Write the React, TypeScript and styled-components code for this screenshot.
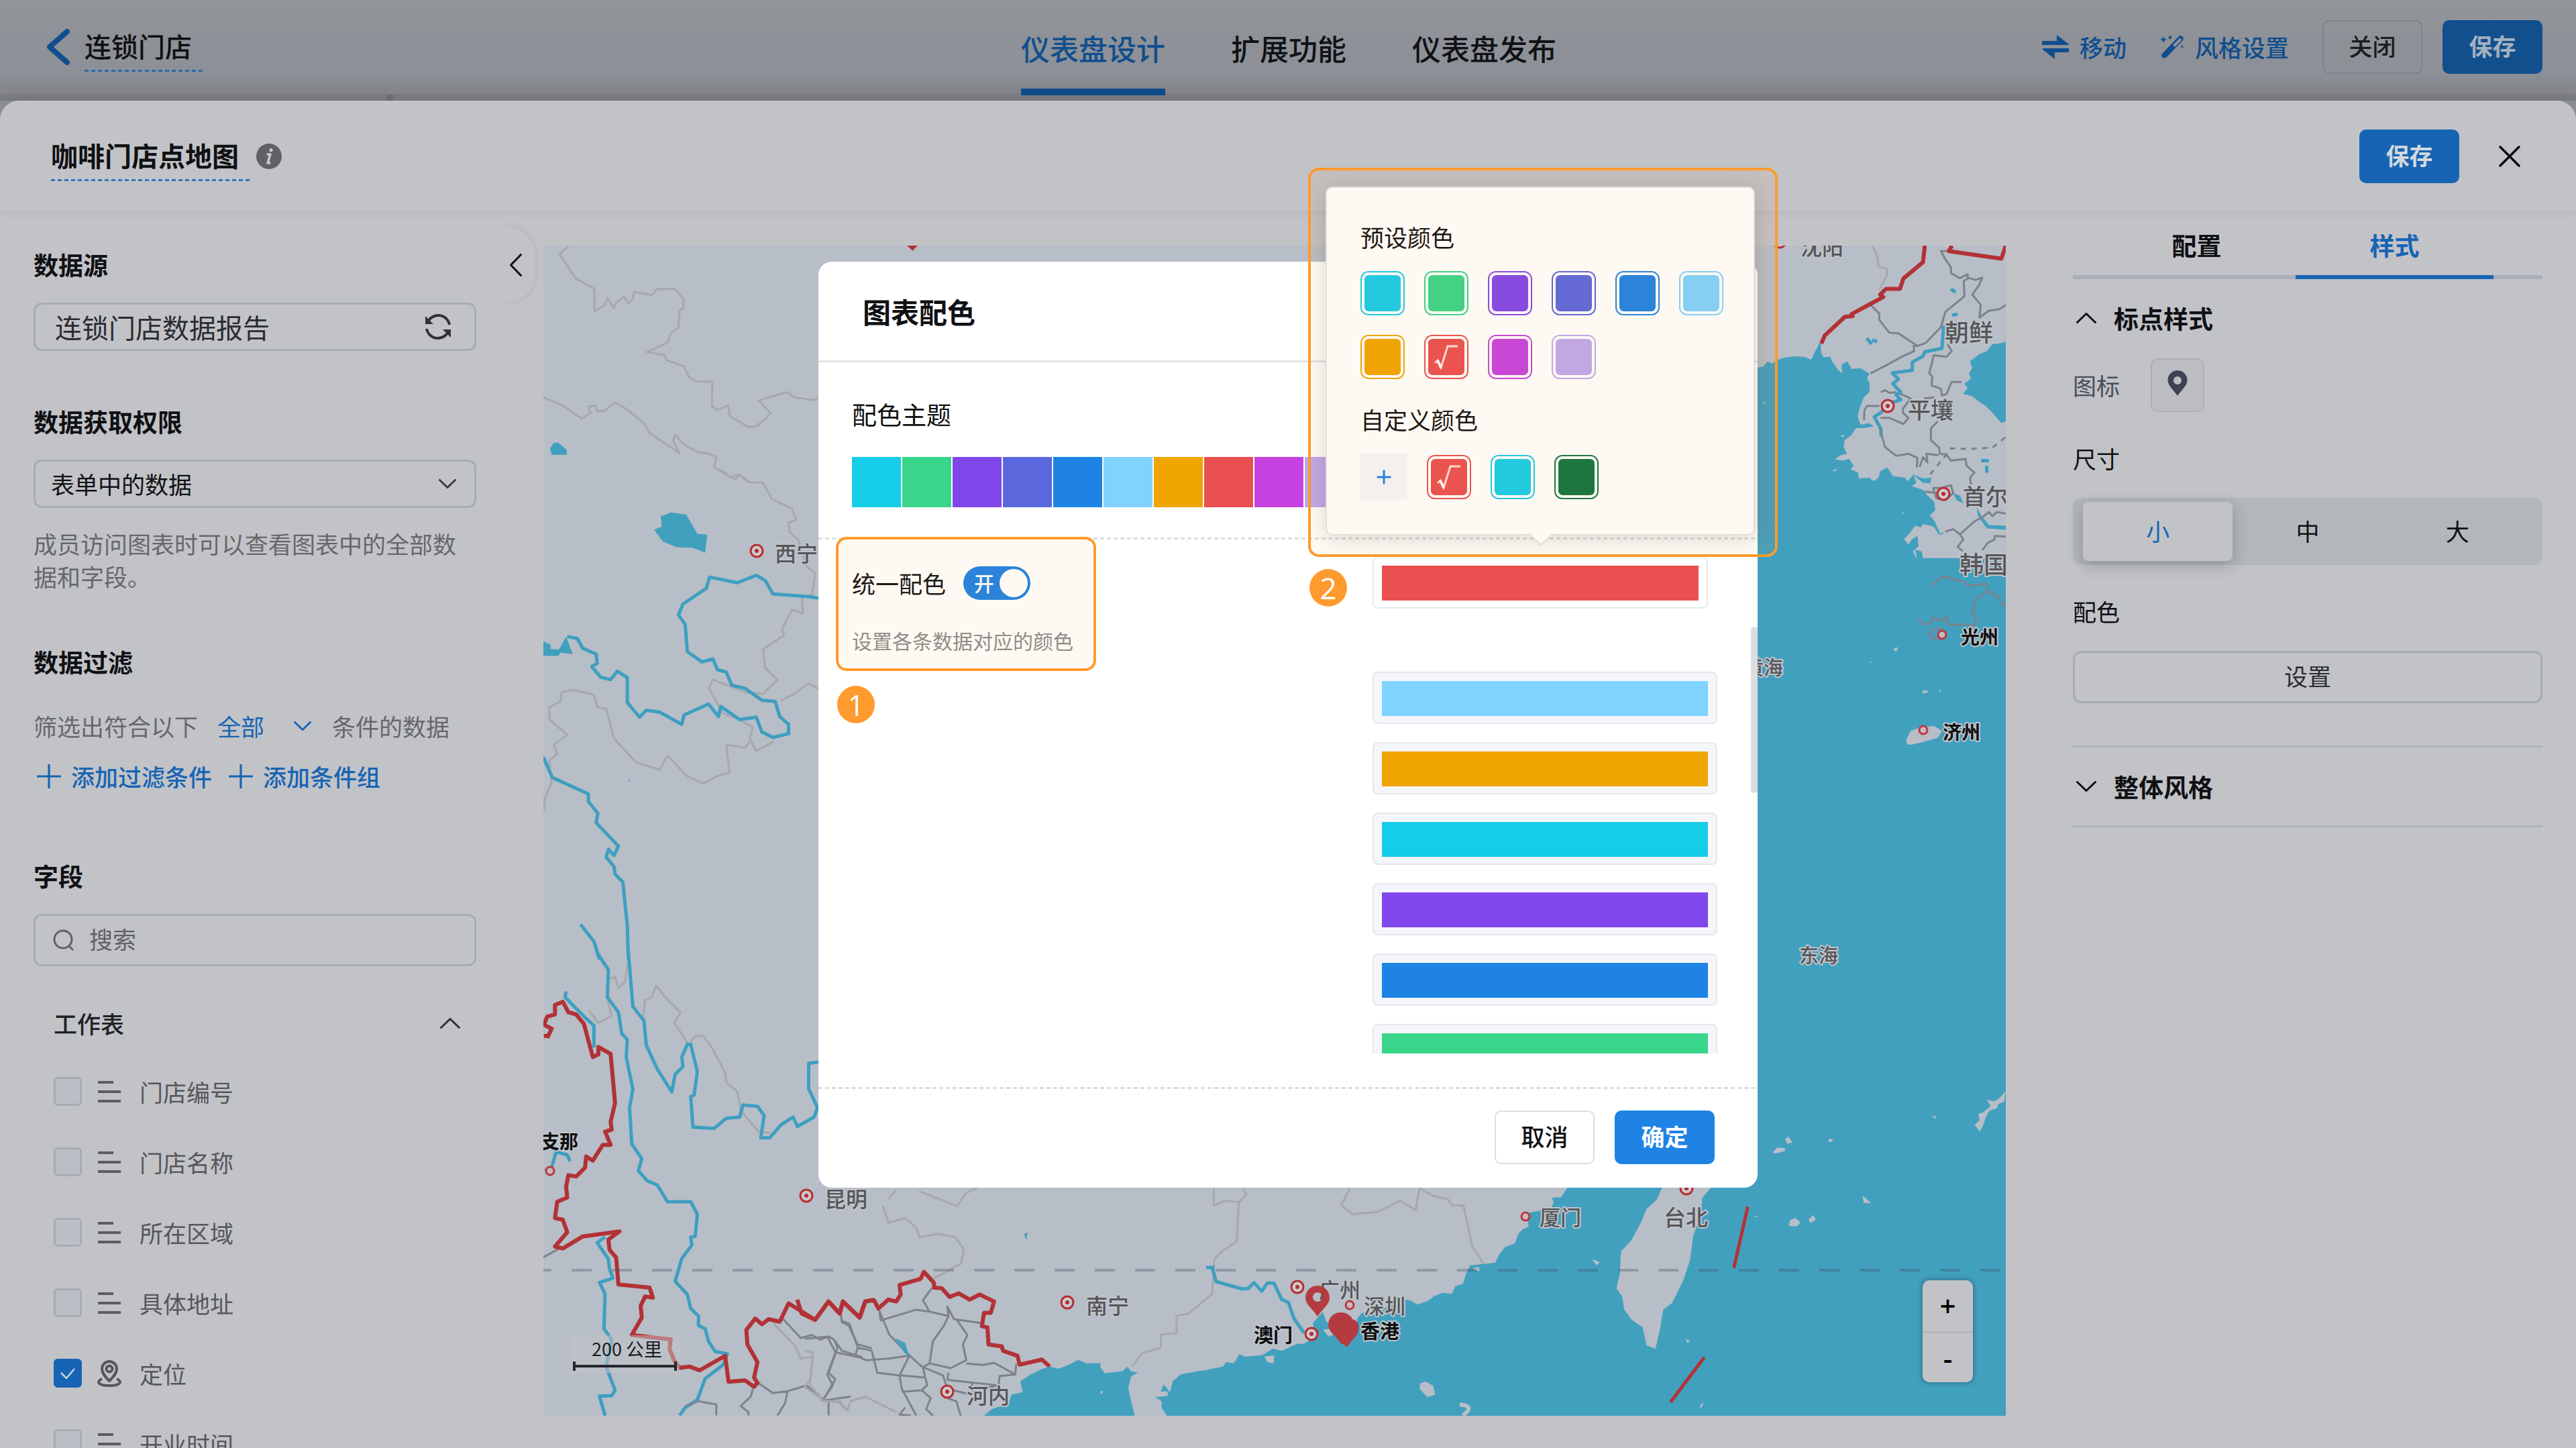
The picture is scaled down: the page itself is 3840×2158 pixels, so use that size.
import React from "react";
import styled, { createGlobalStyle, css } from "styled-components";

const BLUE = "#1764b4";
const MODAL_BLUE = "#1e83e4";
const ORANGE = "#ff9a2e";

const Global = createGlobalStyle`
  * { box-sizing: border-box; }
  body { margin: 0; background: #8f9297; }
  body, button, input, select {
    font-family: "Noto Sans CJK SC", "Noto Sans", sans-serif;
    font-size: 35px;
    line-height: 50px;
  }
  h1, h2, h3, p, ul { margin: 0; padding: 0; }
  button { cursor: pointer; }
`;

const dashes = (color: string) => css`
  background-image: repeating-linear-gradient(to right, ${color} 0 6px, transparent 6px 10px);
  background-repeat: no-repeat;
  background-size: 100% 3px;
`;

/* ---------- page ---------- */

const Page = styled.div`
  position: relative;
  height: 100vh;
  overflow: hidden;
  display: flex;
  flex-direction: column;
  color: #101114;
`;

const TopBar = styled.header`
  flex: none;
  height: 150px;
  padding: 0 50px 0 52px;
  display: grid;
  grid-template-columns: 1fr auto 1fr;
  background:
    linear-gradient(#717379, #717379) 576px 141px / 10px 9px no-repeat,
    linear-gradient(#929599 0, #8e9197 60px, #8d9097 110px, #86888d 140px, #7f8187 140px, #7d7f85 150px);
`;

const TopLeft = styled.div`
  display: flex;
  align-items: center;
  gap: 22px;
  height: 140px;
  padding-left: 18px;
`;

const EditableTitle = styled.h1<{ $line: string; $bold?: boolean }>`
  font-size: 40px;
  font-weight: ${(p) => (p.$bold ? 700 : 500)};
  line-height: 70px;
  padding: 0 16px 4px 0;
  ${(p) => dashes(p.$line)}
  background-position: left bottom;
`;

const IconButton = styled.button`
  display: flex;
  align-items: center;
  justify-content: center;
  border: 0;
  padding: 0;
  background: none;
  color: inherit;
`;

const Tabs = styled.nav`
  display: flex;
  gap: 98px;
  height: 142px;
`;

const TopTab = styled.a<{ $on?: boolean }>`
  font-size: 43px;
  font-weight: 500;
  line-height: 142px;
  text-decoration: none;
  color: ${(p) => (p.$on ? "#104e8e" : "#101216")};
  border-bottom: ${(p) => (p.$on ? "10px solid #104e8e" : "0")};
  height: 142px;
`;

const TopRight = styled.div`
  display: flex;
  align-items: center;
  justify-content: flex-end;
  height: 140px;
`;

const TopAction = styled.button`
  display: flex;
  align-items: center;
  gap: 16px;
  padding: 0;
  margin-right: 50px;
  border: 0;
  background: none;
  color: #104e8e;
  font-weight: 500;
`;

const Button = styled.button<{ $bg?: string; $fg?: string; $line?: string; $bold?: boolean }>`
  width: 149px;
  height: 80px;
  padding: 0 0 4px;
  border-radius: 10px;
  border: 2px solid ${(p) => p.$line ?? p.$bg ?? "transparent"};
  background: ${(p) => p.$bg ?? "transparent"};
  color: ${(p) => p.$fg ?? "#1b1d20"};
  font-weight: ${(p) => (p.$bold ? 700 : 500)};
`;

const ButtonPair = styled.div`
  display: flex;
  gap: 30px;
`;

/* ---------- editor sheet ---------- */

const Sheet = styled.main`
  flex: 1;
  min-height: 0;
  display: flex;
  flex-direction: column;
  background: #c2c3c7;
  border-radius: 28px 28px 0 0;
  box-shadow: 0 -6px 40px rgba(0, 0, 0, 0.1);
`;

const SheetHead = styled.div`
  flex: none;
  height: 165px;
  padding: 0 83px 0 76px;
  display: flex;
  align-items: center;
  justify-content: space-between;
  box-shadow: 0 4px 10px rgba(0, 0, 0, 0.06);
`;

const Cluster = styled.div<{ $gap: number }>`
  display: flex;
  align-items: center;
  gap: ${(p) => p.$gap}px;
`;

const Columns = styled.div`
  flex: 1;
  min-height: 0;
  display: flex;
`;

const LeftPanel = styled.aside`
  position: relative;
  flex: 0 0 810px;
  padding: 54px 100px 0 50px;
  overflow: hidden;
`;

const CollapseTab = styled.button`
  position: absolute;
  top: 23px;
  right: 12px;
  width: 60px;
  height: 113px;
  padding: 0 0 0 22px;
  border: 0;
  border-radius: 0 44px 44px 0;
  background: #c2c3c7;
  clip-path: inset(-12px -12px -12px 16px);
  box-shadow: 2px 0 8px rgba(0, 0, 0, 0.07);
  display: flex;
  align-items: center;
`;

const Heading = styled.h3<{ $top?: number }>`
  font-size: 37px;
  font-weight: 700;
  line-height: 50px;
  margin: ${(p) => p.$top ?? 0}px 0 32px;
`;

const Box = styled.div<{ $h: number; $left: number }>`
  display: flex;
  align-items: center;
  justify-content: space-between;
  height: ${(p) => p.$h}px;
  padding: 0 34px 0 ${(p) => p.$left}px;
  border: 3px solid #a7acb4;
  border-radius: 12px;
`;

const SelectBox = styled(Box)`
  padding-right: 27px;
`;

const SourceName = styled.span`
  font-size: 40px;
  color: #2a2c30;
`;

const PlainSelect = styled.select<{ $color?: string }>`
  flex: 1;
  min-width: 0;
  appearance: none;
  border: 0;
  padding: 0;
  background: none;
  color: ${(p) => p.$color ?? "#101114"};
`;

const Help = styled.p`
  margin-top: 28px;
  line-height: 49px;
  color: #66676b;
`;

const FilterRow = styled.div`
  display: flex;
  align-items: center;
  margin-top: 46px;
  color: #66676b;
`;

const FilterMode = styled.div`
  display: flex;
  align-items: center;
  width: 140px;
  margin: 0 31px 0 29px;
  color: ${BLUE};
`;

const LinkRow = styled.div`
  display: flex;
  gap: 24px;
  margin-top: 25px;
  padding-left: 4px;
`;

const LinkButton = styled.button`
  display: flex;
  align-items: center;
  gap: 14px;
  padding: 0;
  border: 0;
  background: none;
  color: ${BLUE};
  font-weight: 500;
`;

const SearchInput = styled.input`
  flex: 1;
  min-width: 0;
  margin-left: 22px;
  padding: 0 0 4px;
  border: 0;
  background: none;
  &::placeholder { color: #606165; opacity: 1; }
`;

const TableHead = styled.button`
  display: flex;
  justify-content: space-between;
  align-items: center;
  width: 100%;
  margin: 60px 0 24px;
  padding: 0 24px 0 30px;
  border: 0;
  background: none;
  font-weight: 500;
  color: #202226;
`;

const Field = styled.label`
  display: flex;
  align-items: center;
  height: 105px;
  padding-left: 30px;
  color: #56575b;
`;

const FieldIcon = styled.span`
  display: flex;
  width: 42px;
  margin: 0 24px 0 20px;
  justify-content: center;
`;

const Tick = styled.span`
  position: relative;
  display: flex;
  width: 42px;
  height: 43px;
  & svg { position: absolute; inset: 9px 8px; pointer-events: none; }
`;

const TickInput = styled.input`
  appearance: none;
  width: 42px;
  height: 43px;
  margin: 0;
  border: 3px solid #a7acb4;
  border-radius: 6px;
  background: #bbbfc5;
  &:checked { background: ${BLUE}; border-color: ${BLUE}; }
`;

/* ---------- map ---------- */

const MapFrame = styled.section`
  position: relative;
  flex: 1;
  min-width: 0;
  margin: 51px 0 48px;
  overflow: hidden;
  background: #b7bec7;
  & > svg { display: block; width: 100%; height: 100%; }
`;

const ZoomControl = styled.div`
  position: absolute;
  right: 49px;
  bottom: 50px;
  width: 75px;
  border-radius: 10px;
  background: #c2c3c7;
  box-shadow: 0 0 6px 2px rgba(0, 0, 0, 0.25);
`;

const ZoomButton = styled.button`
  display: block;
  width: 100%;
  height: 76px;
  padding: 0;
  border: 0;
  background: none;
  font-family: "Open Sans", sans-serif;
  font-weight: 600;
  font-size: 42px;
  color: #000;
  & + & { border-top: 3px solid #b5b6ba; }
`;

/* ---------- right panel ---------- */

const RightPanel = styled.aside`
  flex: 0 0 850px;
  padding: 0 50px 0 100px;
`;

const PanelTabs = styled.div`
  display: flex;
  height: 101px;
  padding: 0 73px 0 37px;
  box-shadow: inset 0 -6px 0 #a9afb8;
`;

const PanelTab = styled.button<{ $on?: boolean }>`
  flex: 1;
  border: 0;
  border-bottom: 6px solid ${(p) => (p.$on ? BLUE : "transparent")};
  background: none;
  font-size: 37px;
  font-weight: 700;
  line-height: 90px;
  height: 101px;
  padding: 5px 0 0;
  color: ${(p) => (p.$on ? BLUE : "#101114")};
`;

const Group = styled.section<{ $bottom: number }>`
  padding: 33px 0 ${(p) => p.$bottom}px;
  border-bottom: 3px solid #adb4bc;
`;

const GroupHead = styled.button`
  display: flex;
  align-items: center;
  gap: 26px;
  padding: 0 5px;
  border: 0;
  background: none;
  font-size: 37px;
  font-weight: 700;
  color: #101114;
`;

const IconRow = styled.div`
  display: flex;
  align-items: center;
  gap: 46px;
  margin-top: 35px;
  color: #484e5c;
`;

const PinButton = styled.button`
  width: 80px;
  height: 80px;
  padding: 0 0 6px;
  border: 2px solid #adafb4;
  border-radius: 10px;
  background: #bcbdc2;
  display: flex;
  align-items: center;
  justify-content: center;
`;

const Caption = styled.p`
  margin: 44px 0 34px;
`;

const Segments = styled.div`
  display: grid;
  grid-template-columns: repeat(3, 1fr);
  height: 100px;
  padding: 6px 15px;
  border-radius: 12px;
  background: #b3b7bc;
`;

const Segment = styled.label<{ $on?: boolean }>`
  display: flex;
  align-items: center;
  justify-content: center;
  border-radius: 8px;
  padding-bottom: 2px;
  color: ${(p) => (p.$on ? BLUE : "#101114")};
  background: ${(p) => (p.$on ? "#c2c3c7" : "transparent")};
  box-shadow: ${(p) => (p.$on ? "0 6px 24px rgba(0, 0, 0, 0.22)" : "none")};
  & input { appearance: none; margin: 0; width: 0; height: 0; }
`;

const WideButton = styled.button`
  width: 100%;
  height: 78px;
  padding: 0 0 4px;
  border: 3px solid #a7acb4;
  border-radius: 12px;
  background: none;
  color: #2a2c30;
`;

/* ---------- dialog ---------- */

const Mask = styled.div`
  position: absolute;
  inset: 0;
  display: flex;
  justify-content: center;
  align-items: flex-start;
  padding-top: 390px;
`;

const Dialog = styled.div`
  position: relative;
  width: 1400px;
  height: 1380px;
  display: flex;
  flex-direction: column;
  border-radius: 20px;
  background: #fff;
`;

const DialogTitle = styled.h2`
  flex: none;
  height: 150px;
  padding-left: 66px;
  font-size: 42px;
  font-weight: 700;
  line-height: 148px;
  border-bottom: 3px solid #e4e5e7;
`;

const ThemeArea = styled.section`
  flex: none;
  padding: 52px 50px 45px;
`;

const ThemeLabel = styled.p`
  font-size: 37px;
  margin-bottom: 39px;
`;

const ThemeStrip = styled.div`
  display: flex;
  gap: 2px;
  height: 75px;
`;

const ThemeCell = styled.span<{ $c: string }>`
  width: 73px;
  background: ${(p) => p.$c};
`;

const DashLine = styled.hr`
  flex: none;
  width: 100%;
  height: 3px;
  margin: 0;
  border: 0;
  ${dashes("#dcdde0")}
`;

const DialogBody = styled.div`
  flex: 1;
  min-height: 0;
  display: flex;
  justify-content: space-between;
  padding: 0 0 50px 50px;
`;

const Uniform = styled.div`
  padding-top: 40px;
`;

const SwitchRow = styled.div`
  display: flex;
  align-items: center;
  gap: 26px;
`;

const SwitchBox = styled.span`
  position: relative;
  display: flex;
`;

const SwitchInput = styled.input`
  appearance: none;
  width: 100px;
  height: 50px;
  margin: 0;
  border-radius: 25px;
  background: ${MODAL_BLUE};
  &::after {
    content: "";
    display: block;
    width: 42px;
    height: 42px;
    margin: 4px 4px 4px 54px;
    border-radius: 50%;
    background: #fff;
  }
`;

const SwitchText = styled.span`
  position: absolute;
  left: 16px;
  top: 0;
  font-size: 30px;
  font-weight: 500;
  line-height: 48px;
  color: #fff;
`;

const Hint = styled.p`
  margin-top: 40px;
  font-size: 30px;
  line-height: 40px;
  color: #8c8c8c;
`;

const ColorList = styled.ul`
  position: relative;
  width: 574px;
  padding: 25px 60px 0 0;
  overflow: hidden;
  list-style: none;
  display: flex;
  flex-direction: column;
  gap: 27px;
`;

const ColorItem = styled.li<{ $active?: boolean }>`
  flex: none;
  display: flex;
  width: ${(p) => (p.$active ? 500 : 514)}px;
  margin-bottom: ${(p) => (p.$active ? 67 : 0)}px;
`;

const ColorField = styled.button<{ $c: string; $active?: boolean }>`
  width: 100%;
  height: 78px;
  padding: 12px;
  border: 2px solid #e6e7ea;
  border-radius: 8px;
  background: ${(p) => (p.$active ? "#fff" : "#f5f6fb")};
  &::before {
    content: "";
    display: block;
    height: 52px;
    background: ${(p) => p.$c};
  }
`;

const Thumb = styled.span`
  position: absolute;
  top: 544px;
  right: 0;
  width: 10px;
  height: 248px;
  border-radius: 5px;
  background: #dcdde0;
`;

const DialogFoot = styled.footer`
  flex: none;
  display: flex;
  justify-content: flex-end;
  gap: 30px;
  height: 147px;
  padding: 32px 64px 0 0;
`;

const Popover = styled.div`
  position: absolute;
  left: 756px;
  top: -112px;
  width: 640px;
  padding: 48px 40px 50px 50px;
  border: 2px solid #e3e3e5;
  border-radius: 10px;
  background: #fff;
  box-shadow: 0 4px 32px rgba(0, 0, 0, 0.14);
`;

const Arrow = styled.svg`
  position: absolute;
  left: 299px;
  bottom: -18px;
`;

const SwatchTitle = styled.p<{ $top?: number }>`
  margin: ${(p) => p.$top ?? 0}px 0 26px;
`;

const Swatches = styled.div`
  display: flex;
  flex-wrap: wrap;
  gap: 29px;
`;

const Swatch = styled.button<{ $c: string }>`
  position: relative;
  display: flex;
  align-items: center;
  justify-content: center;
  width: 66px;
  height: 66px;
  padding: 4px;
  border: 2px solid ${(p) => p.$c};
  border-radius: 12px;
  background: ${(p) => p.$c};
  background-clip: content-box;
  overflow: hidden;
  &::before {
    content: "";
    position: absolute;
    inset: 0;
    border: 4px solid #fff;
    border-radius: 10px;
  }
  & svg { position: relative; }
`;

const AddSwatch = styled.button`
  display: flex;
  align-items: center;
  justify-content: center;
  width: 70px;
  height: 70px;
  padding: 0;
  border: 0;
  border-radius: 4px;
  background: #f5f6fa;
  color: ${MODAL_BLUE};
`;

const CustomRow = styled.div`
  display: flex;
  align-items: center;
  gap: 29px;
`;

const Callout = styled.div<{ $x: number; $y: number; $w: number; $h: number }>`
  position: absolute;
  left: ${(p) => p.$x}px;
  top: ${(p) => p.$y}px;
  width: ${(p) => p.$w}px;
  height: ${(p) => p.$h}px;
  border: 4px solid ${ORANGE};
  border-radius: 16px;
  background: rgba(255, 154, 46, 0.06);
  pointer-events: none;
`;

const Badge = styled.span<{ $x: number; $y: number }>`
  position: absolute;
  left: ${(p) => p.$x}px;
  top: ${(p) => p.$y}px;
  width: 56px;
  height: 56px;
  border-radius: 50%;
  background: ${ORANGE};
  color: #fff;
  font-family: "Open Sans", sans-serif;
  font-size: 44px;
  line-height: 56px;
  text-align: center;
`;

/* ---------- icons ---------- */

type ChevronProps = { dir: "up" | "down" | "left"; w: number; h: number; s?: number; color?: string };
const Chevron = ({ dir, w, h, s = 3, color = "currentColor" }: ChevronProps) => {
  const p = s / 2;
  const d =
    dir === "up"
      ? `M${p} ${h - p}L${w / 2} ${p}L${w - p} ${h - p}`
      : dir === "down"
      ? `M${p} ${p}L${w / 2} ${h - p}L${w - p} ${p}`
      : `M${w - p} ${p}L${p} ${h / 2}L${w - p} ${h - p}`;
  return (
    <svg width={w} height={h} viewBox={`0 0 ${w} ${h}`} fill="none" stroke={color} strokeWidth={s} strokeLinecap="round" strokeLinejoin="round">
      <path d={d} />
    </svg>
  );
};

const Plus = ({ size, s }: { size: number; s: number }) => (
  <svg width={size} height={size} viewBox="0 0 36 36" stroke="currentColor" strokeWidth={s} fill="none">
    <path d="M18 1V35M1 18H35" />
  </svg>
);

const MoveIcon = () => (
  <svg width="40" height="36" viewBox="0 0 40 36" fill="#104e8e">
    <path d="M0 9H22V0L40 14V15H0Z" />
    <path d="M40 26H19V36L1 22V20H40Z" />
  </svg>
);

const WandIcon = () => (
  <svg width="36" height="36" viewBox="0 0 36 36" fill="#104e8e">
    <path d="M28 2q2-2 5 0t1 6L10 33q-3 3-6 1t-1-6ZM29 5L19 15l3 3L32 8q0-3-3-3Z" fillRule="evenodd" />
    <path d="M5 2l1.500 3.500L10 7 6.500 8.500 5 12 3.500 8.500 0 7l3.500-1.500ZM15 0l1 2.500L18.500 4 16 5l-1 3-1-3-2.500-1L14 2.500ZM33 15l.8 2 2 .8-2 .8-.8 2-.8-2-2-.8 2-.8Z" />
  </svg>
);

const InfoIcon = () => (
  <svg width="38" height="38" viewBox="0 0 38 38">
    <circle cx="19" cy="19" r="19" fill="#606165" />
    <g fill="none" stroke="#c8c9cc" strokeWidth="4" strokeLinecap="round" strokeLinejoin="round">
      <path d="M17 16h4l-4 13h3" strokeWidth="3.500" />
      <path d="M22 9.500v.2" strokeWidth="5" />
    </g>
  </svg>
);

const CloseIcon = () => (
  <svg width="32" height="32" viewBox="0 0 32 32" stroke="#08090a" strokeWidth="3.500" strokeLinecap="round">
    <path d="M2 2L30 30M30 2L2 30" />
  </svg>
);

const RefreshIcon = () => (
  <svg width="40" height="38" viewBox="0 0 40 38" fill="none" stroke="#303236" strokeWidth="4">
    <path d="M4 14A17 17 0 0 1 37 16M36 24A17 17 0 0 1 3 22" />
    <path d="M1 3V15H13ZM39 35V23H27Z" fill="#303236" stroke="none" />
  </svg>
);

const SearchIcon = () => (
  <svg width="32" height="32" viewBox="0 0 32 32" fill="none" stroke="#606165" strokeWidth="3" strokeLinecap="round">
    <circle cx="15" cy="15" r="13" />
    <path d="M24.500 25.500L29 30" />
  </svg>
);

const TextFieldIcon = () => (
  <svg width="34" height="34" viewBox="0 0 34 34" stroke="#5c5d61" strokeWidth="4">
    <path d="M0 3H23M0 17H34M0 31H34" />
  </svg>
);

const PlaceIcon = () => (
  <svg width="38" height="40" viewBox="0 0 38 40" fill="none" stroke="#56575b" strokeWidth="4" strokeLinejoin="round">
    <path d="M19 31C12 24 8 19 8 13a11 11 0 0 1 22 0c0 6-4 11-11 18Z" />
    <circle cx="19" cy="13" r="4.500" />
    <path d="M8 28C-1 32 2 38 19 38s20-6 11-10" />
  </svg>
);

const PinIcon = () => (
  <svg width="30" height="38" viewBox="0 0 30 38" fill="#3d4352">
    <path fillRule="evenodd" d="M15 0a14.500 14.500 0 0 1 14.500 14.500C29.500 23 21 29 15 38 9 29 .5 23 .5 14.500A14.500 14.500 0 0 1 15 0Zm0 9a6 6 0 1 0 0 12 6 6 0 0 0 0-12Z" />
  </svg>
);

const Root = () => (
  <svg width="36" height="38" viewBox="0 0 36 38" fill="none" stroke="#fff" strokeOpacity=".8" strokeWidth="3">
    <path d="M1 28L5 24L10 35L20 3H35" />
    <path d="M5 24L10 35" strokeWidth="4" />
  </svg>
);

const CheckIcon = () => (
  <svg width="26" height="25" viewBox="0 0 26 25" fill="none" stroke="#c9d3de" strokeWidth="2.500">
    <path d="M3 12L11 20L23 6" />
  </svg>
);

/* ---------- map drawing ---------- */

const SEA = "#42a0bf";
const LAND = "#b7bec7";

const Region = styled.g`
  & path { vector-effect: non-scaling-stroke; fill: none; stroke-linejoin: round; }
  & .sea { fill: ${SEA}; }
  & .land { fill: ${LAND}; }
  & .river { stroke: #3e9fc0; stroke-width: 5px; }
  & .province { stroke: #a6a8ad; stroke-width: 3px; }
  & .district { stroke: #7d828d; stroke-width: 3px; }
  & .border { stroke: #b23236; stroke-width: 6px; }
`;

const PlaceName = styled.text<{ $s: number; $bold?: boolean }>`
  font-family: "Noto Sans CJK SC", sans-serif;
  font-size: ${(p) => p.$s}px;
  font-weight: ${(p) => (p.$bold ? 700 : 500)};
  fill: ${(p) => (p.$bold ? "#0d0e10" : "#55565a")};
  stroke: #c0c4ca;
  stroke-width: 4px;
  stroke-linejoin: round;
  paint-order: stroke;
`;

const ScaleText = styled.text`
  font-size: 27px;
  fill: #1a1b1e;
`;

const places: [string, number, number, number, boolean?][] = [
  ["沈阳", 2684, 380, 32], ["朝鲜", 2899, 509, 36], ["平壤", 2844, 624, 34],
  ["首尔", 2926, 753, 34], ["韩国", 2921, 855, 36], ["光州", 2923, 960, 28, true],
  ["济州", 2896, 1102, 28, true], ["黄海", 2600, 1006, 29], ["东海", 2682, 1435, 29],
  ["台北", 2480, 1827, 33], ["厦门", 2295, 1826, 31], ["广州", 1966, 1934, 31],
  ["深圳", 2033, 1958, 31], ["香港", 2028, 1995, 29, true], ["澳门", 1869, 2001, 29, true],
  ["南宁", 1619, 1958, 32], ["河内", 1441, 2092, 32], ["昆明", 1229, 1799, 32],
  ["西宁", 1155, 837, 32], ["支那", 806, 1712, 28, true],
];

const capitals: [number, number][] = [
  [2814, 605], [2897, 736], [2514, 1771], [1934, 1918], [1955, 1988], [1591, 1941],
  [1412, 2074], [1202, 1782], [1128, 821], [2653, 360],
];

const towns: [number, number][] = [[2895, 946], [2867, 1088], [2274, 1813], [2012, 1945], [820, 1745]];

const MapDrawing = () => (
  <svg viewBox="810 366 2180 1744" preserveAspectRatio="xMinYMin slice" role="img" aria-label="咖啡门店点地图">
    <rect x="810" y="366" width="2180" height="1744" fill={LAND} />

    <Region transform="translate(0 0) scale(.829 .4592)">
      <path className="province" d="M1022 798L1006 825L1035 903L1069 938L1069 1009L1088 990L1092 966L1104 1000L1108 982L1122 963L1130 985L1138 970L1140 948L1172 957L1182 938L1214 938L1229 970L1229 1000L1222 1008L1220 1064L1206 1082L1200 1112L1163 1143L1195 1152L1198 1168L1230 1190L1238 1222L1252 1238L1281 1239L1280 1318L1290 1330L1310 1316L1312 1350L1345 1385L1360 1385L1386 1342L1364 1300L1414 1273L1430 1290L1464 1299L1480 1280M977 1290L1012 1316L1046 1359L1062 1340L1058 1320L1070 1316L1074 1335L1088 1333L1106 1306L1130 1332L1158 1374L1168 1405L1222 1471L1210 1430L1214 1411L1228 1440L1255 1468L1270 1470L1288 1482L1284 1515L1305 1540L1322 1556L1330 1540L1350 1568" />
      <path className="sea" d="M989 1455L996 1437L1004 1437L1019 1460V1476H992Z" />
      <path d="M1631 797H1650L1641 814Z" style={{ fill: "#b23236" }} />
    </Region>

    <Region transform="translate(0 700) scale(.829 .4656)">
      <path className="province" d="M1298 0L1312 24L1328 15L1346 40L1372 42L1388 94L1424 125L1432 160L1418 170L1420 200L1436 225L1450 310L1466 330L1460 400L1442 410L1444 460L1424 448L1406 510L1410 530L1372 575L1376 635L1398 672L1372 717L1345 715L1282 672L1275 700L1300 780L1330 800L1354 825L1348 860L1360 900L1392 870M1475 705L1454 684L1430 715L1404 740M1068 720L1030 705L1010 712L1008 742L988 760V800L1020 848L996 880L1002 910L988 930L992 1000L980 1050L978 1090M1068 720L1074 760L1090 765L1104 860L1144 937L1186 960L1200 915L1235 980L1265 1005L1290 980L1312 970L1306 880L1340 890L1348 870" />
      <path className="sea" d="M1188 150L1206 137L1234 144L1254 205L1272 208L1268 266L1246 250L1216 248L1192 230L1176 192L1190 182ZM977 550L990 560V574L1005 575L1018 534L1030 590L1008 586L1004 596H977ZM1131 990L1133 995L1130 1000Z" />
      <path className="river" d="M1475 412L1452 406L1390 398L1376 355L1360 338L1326 362L1276 344L1270 380L1228 430L1220 465L1232 495L1236 582L1262 615L1282 606L1290 640L1306 648L1316 690L1340 700L1370 738L1394 742L1402 790L1418 815L1418 845L1390 857L1370 840L1360 792L1330 800L1296 758L1292 790L1274 750L1230 785L1226 815L1186 776L1162 770L1150 792L1128 745V665L1110 645L1098 672L1080 664L1064 630L1074 620L1072 590L1048 572L1038 540L1020 534M977 920L993 985L1058 1038V1062L1075 1100L1072 1130L1112 1205L1104 1235L1094 1215L1090 1240L1104 1270L1106 1295L1120 1320L1128 1460L1130 1568M1044 1456L1068 1510L1078 1568" />
    </Region>

    <Region transform="translate(0 1420) scale(.829 .4707)">
      <path className="province" d="M1128 40L1124 90L1112 112L1106 75L1092 84L1094 160L1100 200L1075 222L1060 185L1072 210M1156 210L1160 150L1172 140L1180 104L1196 140L1224 190L1212 220L1238 290L1250 265L1264 262L1280 300L1304 380L1306 410L1326 440L1332 500L1364 566L1386 570" />
      <path className="river" d="M1074 0L1094 54L1092 140L1112 188L1118 255L1128 275L1126 330L1138 432L1132 490L1136 605L1154 652L1148 690L1164 722L1182 735L1200 788H1242L1254 828L1250 898L1242 900L1244 925L1226 968L1214 1040L1236 1082L1242 1126L1256 1150V1180L1268 1190L1274 1230L1286 1262L1308 1270L1300 1305L1268 1348L1254 1415L1232 1440L1222 1465M1130 0L1138 170L1158 215L1162 292L1182 368L1208 440L1214 385L1228 360L1226 330L1236 290H1242L1254 376L1248 450L1242 455L1246 552L1284 556L1306 524L1330 520L1336 482L1362 486L1374 515L1368 586H1384L1404 545L1426 520L1434 550L1464 520L1470 490L1454 430V350L1475 345M1018 122L1016 140L1052 205L1068 230V300M1025 660L1020 640L1000 630L992 680L980 690M1088 900L1074 918L1094 970L1096 1000L1102 1030L1078 1044L1088 1080L1086 1190L1100 1225L1090 1310L1106 1385L1100 1402L1078 1404L1088 1465" />
      <path className="district" d="M977 964L1006 936M1406 1155L1440 1220L1460 1210L1475 1225L1490 1215L1500 1225M1512 1142L1514 1170L1526 1180L1542 1240L1568 1252M1500 1225L1514 1260L1550 1280M1500 1225L1506 1250L1490 1330L1502 1350L1480 1418M1362 1360L1390 1394L1416 1388L1450 1370L1480 1418L1530 1405M1354 1380L1350 1405L1332 1435L1346 1455V1465M1416 1388L1412 1425L1398 1465M1490 1420L1490 1465M1232 1435L1256 1420L1288 1430V1465" />
      <path className="province" d="M1390 1172L1430 1245L1440 1285L1462 1278L1456 1370L1484 1420L1510 1420L1524 1448L1530 1418L1560 1405" />
      <path className="border" d="M984 270V262L978 264M984 270L992 240L978 228L984 202L998 195V165L1012 155L1022 188L1036 195L1050 225L1066 330L1076 322V298L1098 320L1106 476L1098 535L1100 560L1088 566L1098 608L1084 608L1066 658L1054 645L1052 680L1036 708L1022 704L1018 740L1020 775L1002 788L998 840L1012 845L1020 885L998 930L1012 936L1048 898L1114 882L1094 908L1096 940L1108 965L1112 1050L1168 1060L1174 1092L1160 1088L1152 1118L1154 1155L1136 1210L1206 1224L1204 1255L1212 1290L1222 1314L1240 1310L1258 1322L1304 1276L1310 1358L1340 1354L1356 1374L1362 1362L1356 1345L1362 1296L1344 1240L1342 1194L1358 1158L1370 1176L1382 1160L1402 1168L1418 1110L1466 1162L1490 1104L1510 1142L1516 1104L1546 1155L1556 1104L1572 1098" />
    </Region>

    <Region transform="translate(1200 1420) scale(.829 .4707)">
      <path className="province" d="M140 800L150 855L180 840L200 870L206 900L240 890L270 900L286 940L280 985L232 1030M150 780L164 750M205 755L274 802L290 760L310 745M735 745V800L755 785L780 790L794 765L788 745M780 790L776 915L750 945L736 970L732 1080L690 1142L668 1150V1205L640 1208V1250L606 1268L588 1310M1105 745L1130 770L1156 780L1164 800L1184 800L1200 930L1222 990L1238 1028M1105 745L1098 815L1070 785L1030 820L985 828L964 800L980 745" />
      <path className="district" d="M228 1062L212 1100L224 1136L200 1130L136 1164L134 1135L152 1210L188 1275L210 1310L248 1338L256 1380L300 1400M64 1140L66 1165L80 1175L95 1250L120 1260L130 1330L170 1338L174 1380L200 1465M0 1222L40 1215L55 1265L95 1280M55 1265L40 1335L50 1370L30 1420M224 1136L258 1150L256 1120L268 1160L316 1172M258 1150L250 1180L230 1230L224 1300L262 1315L290 1290L284 1240L292 1210L274 1165M224 1300L212 1312L216 1345L172 1338M290 1300L320 1305L340 1298L378 1335L350 1340L348 1370L256 1352L258 1330M188 1275L170 1338M216 1345L220 1368L210 1385L174 1390M210 1385L226 1410L218 1445L230 1465M256 1410L272 1420L280 1465M190 1465L170 1462L180 1440M300 1360L302 1400M348 1370L300 1385M378 1335L380 1300M95 1250L90 1275L110 1290L150 1285L188 1275" />
      <path className="province" d="M0 1260L14 1265L10 1345L0 1375L35 1420L60 1422L76 1450L82 1420L108 1405L165 1455" />
      <path className="border" d="M-14 1098L-6 1142L18 1162L42 1104L62 1142L68 1104L98 1155L108 1104L124 1100L132 1126L150 1098L164 1104L172 1082L170 1052L208 1032L214 1010L232 1045V1060L246 1062L260 1090L276 1078L296 1098L314 1082L340 1104L334 1140H322L318 1182L328 1186L330 1240L354 1246L356 1260L382 1276L386 1304L426 1288L440 1310" />
      <path className="sea" d="M394 890L400 885L398 910ZM162 1220L180 1235L188 1280L178 1265Z" />
    </Region>

    <Region transform="translate(1400 1765) scale(.829 .3333)">
      <path className="sea" d="M80 1036L95 1005L125 980L130 940L150 930L146 880L165 850L185 825L200 815L215 825L232 808L250 785L265 800L290 800L290 820L298 845L330 835L338 815L346 838L358 840L345 860L340 910L344 960L352 1036Z" />
      <path className="sea" d="M410 1036L400 1000L400 970L388 950L398 930L404 895L415 930L420 880L435 850L460 838L480 830L510 815L516 795L530 800L540 760L550 770L580 765L600 735L616 745L645 712L655 715L676 680L672 620L690 570L695 610L712 650L750 650L752 600L760 575L790 565L838 515L848 520L860 538L880 520L890 500L905 485L922 490L928 455L942 445L948 395L955 362L985 355L1000 350L1008 310L1018 280L1035 265L1042 220L1050 200L1060 190L1056 130L1075 120L1100 110L1105 80L1102 60L1118 58L1130 15V-2800H1918V1036Z" />
      <path className="land" d="M1300 15L1290 70L1272 110L1262 170L1245 250L1226 300L1224 400L1218 465L1228 500L1232 560L1245 605L1265 640L1272 720L1288 735L1296 650L1302 560L1318 530L1338 430L1350 340L1356 230L1370 130L1372 60L1388 15ZM865 890L875 882L888 900L892 940L878 952L864 915ZM960 375L970 370L972 388L962 385ZM1174 335L1188 348L1182 362ZM1342 690L1350 700L1346 710ZM1370 980L1374 978L1370 1000ZM1530 160L1540 150L1548 175L1542 188L1528 185ZM290 925H294V935H290Z" />
      <path d="M936 985Q958 990 950 1015L942 1034" style={{ stroke: LAND, strokeWidth: 6 }} />
      <path className="land" d="M388 930L410 925L412 945L390 952ZM690 650L705 645L712 670L700 680ZM585 770L602 765V800L590 795Z" />
      <path className="river" d="M490 365L498 435L545 468L556 465L566 440L580 478L590 442L602 442L616 515L628 528L638 600L656 665M480 372H495" />
      <path className="border" d="M1454 100L1429 374M1376 773L1315 974" style={{ strokeWidth: 5 }} />
    </Region>

    <Region transform="translate(2400 1420) scale(.9184 .4707)">
      <path className="land" d="M642 440L640 470L630 480L628 492L616 500L610 520L606 545L600 566L592 545L600 530L598 510L606 505L618 485L612 465L624 470L632 460ZM284 590L290 582L296 600L288 605ZM264 632L272 616L284 618L284 628L268 636ZM354 594L358 588L363 595L356 600ZM523 520L527 515L530 526ZM410 768L424 793L412 792ZM290 860L298 842L308 850L304 865H292ZM322 845L330 830L334 845L326 855ZM234 834L240 832L236 838ZM146 1435L152 1424L148 1442Z" />
    </Region>

    <Region transform="translate(2600 360) scale(.3333 .5102)">
      <path className="sea" d="M-800 1700V380L62 368L85 365L105 350L125 356L150 345L190 338L230 335L270 337L300 345L318 320L345 300L340 320L355 338L385 336L395 352L420 375L440 385L435 360L462 350L480 372L520 370L560 385L550 400L562 415L560 440L535 455L520 480L508 510L520 535L560 530L580 540L530 545L500 545L480 565L450 580L445 600L460 620L430 625L405 636L440 640L470 635L490 655L475 665L510 675L512 692L560 690L580 700L600 690L610 670L640 660L665 685L720 690L730 700L758 680L770 705L750 715L800 725L820 742L850 760L855 785L830 800L850 815L868 840L880 858L895 848L870 855L850 835L835 830L800 825L790 835L765 830L740 852L715 870L735 885L750 870L775 860L780 890L755 905L775 935L765 900L795 905L800 930L805 980L825 1010L815 1030L870 1040L850 1022L820 1045L815 1060L790 1075L830 1080L785 1090L775 1120L760 1138L778 1150L782 1165L740 1150L700 1160L720 1180L765 1180L720 1195L665 1215L700 1210L740 1200L745 1225L720 1240L770 1235L710 1275L725 1285L765 1262L790 1258L785 1290L820 1270L850 1292L862 1262L890 1270L880 1240L920 1245L945 1228L950 1250L980 1262L975 1240L1005 1235L985 1215L1015 1195L1022 1220L1045 1200L1060 1215L1075 1180L1100 1190L1110 1220L1130 1190L1172 1185V1700Z" />
      <path className="sea" d="M1172 292L1140 298L1110 300L1085 320L1050 330L1010 350L1020 370L1005 385L1015 400L985 415L1000 428L978 445L1020 452L1045 465L1080 480L1110 500L1150 530L1172 525ZM340 290L320 320L302 345L335 335L345 325Z" />
      <path className="land" d="M725 1455L745 1430L790 1418L850 1415L885 1430L865 1450L800 1462L745 1470L728 1468ZM795 1315L808 1310L828 1315L800 1320ZM868 1312L880 1308L876 1316ZM428 568L450 565L445 572ZM395 668L418 664L405 672ZM560 1228L572 1227L564 1232ZM85 470L94 468L92 476ZM665 1190L690 1185L680 1198ZM708 790L718 792L710 796Z" />
      <path className="river" d="M892 245L885 312L808 322L800 335L752 352V376L662 384L690 402L665 415L700 440L680 448L700 462L640 475L615 498L582 512L612 548V570M548 282L570 300M572 288L595 292M925 138L945 148M1060 640L1095 640M1085 655V675M930 215L955 212" />
      <path className="sea" d="M755 680L800 692L838 690L832 706L800 705ZM935 735L965 742L980 765L950 755ZM1040 775L1060 800L1095 828L1172 830V842L1085 838L1045 800Z" />
      <path className="province" d="M575 12L596 45L600 72L640 80L638 100L605 140" />
      <path className="district" d="M565 185L604 210V228L648 266L690 268L775 305L812 296L880 250L900 205L985 160L982 115L1000 108V95L965 107L925 92V75L898 50L880 28H905M1000 105L1035 112L1065 105L1050 128L1020 155L1058 185L1052 222L1095 202L1140 198L1172 185M775 305L758 305L760 320L700 338L640 360L565 385M910 300L928 320L905 336L848 332L828 385L842 395L838 420L880 430L885 450L905 445L928 410H972M612 440L630 434L650 442L680 440M700 445L745 458L710 488V500L735 515L712 533L650 515L610 515M605 480H550L538 492L536 522M805 458L850 455M866 525L836 545L835 580L872 602L875 620M608 548L630 600L680 626L735 620L775 632L772 660M785 658L800 630L820 645L815 620L870 624M875 620L905 622L925 640L990 635L995 655L1030 675L1010 690L1015 710M808 730L860 735M900 847L935 840L965 855L1035 815L1060 808L1095 790L1110 802L1130 790L1172 795M965 855L980 870L955 892L978 905M1065 902L1090 880L1120 870V860L1172 862M835 1004L890 978L985 995L1000 1005L1085 1000L1090 1020L1040 1045L1020 1080L1038 1100L1030 1122L1000 1118L915 1120L905 1095L890 1108L842 1098L838 1112L805 1120L780 1102M1090 1020L1140 1040L1150 1060L1172 1065M825 1148L850 1132L885 1130L870 1160L838 1158ZM845 720H880L925 712L935 735L900 755L860 750Z" />
      <path className="district" strokeDasharray="8 8" d="M832 680L905 622L925 604L1000 606L1110 602L1172 570" />
      <path className="border" d="M808 12L800 60L712 108L697 138H635L608 155L622 162L480 212L485 218L450 220L360 275L345 298M930 12L915 28L1150 50L1170 12" />
    </Region>

    <line x1="810" x2="2990" y1="1893" y2="1893" stroke="#3a4652" strokeOpacity=".3" strokeWidth="4" strokeDasharray="30 30" strokeDashoffset="18" />

    {capitals.map(([x, y]) => (
      <g key={`${x}-${y}`}>
        <circle cx={x} cy={y} r="9" fill="#c9c9cd" stroke="#b82b30" strokeWidth="3" />
        <circle cx={x} cy={y} r="3" fill="#b82b30" />
      </g>
    ))}
    {towns.map(([x, y]) => (
      <circle key={`${x}-${y}`} cx={x} cy={y} r="6" fill="#c9b9be" stroke="#b93a40" strokeWidth="3" />
    ))}
    {places.map(([name, x, y, s, bold]) => (
      <PlaceName key={name} x={x} y={y} $s={s} $bold={bold}>{name}</PlaceName>
    ))}

    <g fill="#b43c40">
      <path fillRule="evenodd" d="M1964 1916a18 18 0 0 1 18 18c0 10-10 16-18 28-8-12-18-18-18-28a18 18 0 0 1 18-18Zm0 10a7 7 0 1 0 0 14 7 7 0 0 0 0-14Z" />
      <path d="M1998 1956a18 18 0 0 1 18 10c8 2 10 8 9 16-1 10-10 14-17 26l-4-4-6-2c-6-12-18-16-18-28a18 18 0 0 1 18-18Z" />
    </g>

    <rect x="850" y="1990" width="163" height="56" fill="#c2c3c7" fillOpacity=".5" />
    <ScaleText x={882} y={2021}>200 公里</ScaleText>
    <path d="M856 2036H1007M856 2029V2043M1007 2029V2043" stroke="#25282c" strokeWidth="4" fill="none" />
  </svg>
);

/* ---------- data ---------- */

const theme = ["#16cde8", "#38d58a", "#8047ea", "#5b67dd", "#1e83e4", "#80d2ff", "#f0a500", "#ea5050", "#c542e0", "#bea9ee"];
const custom = ["#ea5050", "#16cde8", "#107540"];
const listed = ["#ea5050", "#80d2ff", "#f0a500", "#16cde8", "#8047ea", "#1e83e4", "#38d58a"];
const fields = ["门店编号", "门店名称", "所在区域", "具体地址", "定位", "开业时间"];

export default function App() {
  return (
    <Page>
      <Global />
      <TopBar>
        <TopLeft>
          <IconButton aria-label="返回"><Chevron dir="left" w={34} h={54} s={8} color="#104e8e" /></IconButton>
          <EditableTitle $line="#2a6cae">连锁门店</EditableTitle>
        </TopLeft>
        <Tabs>
          <TopTab href="#design" $on>仪表盘设计</TopTab>
          <TopTab href="#extend">扩展功能</TopTab>
          <TopTab href="#publish">仪表盘发布</TopTab>
        </Tabs>
        <TopRight>
          <TopAction><MoveIcon />移动</TopAction>
          <TopAction><WandIcon />风格设置</TopAction>
          <ButtonPair>
            <Button $line="#7f838a">关闭</Button>
            <Button $bg="#124f8d" $fg="#a3b1c0" $bold>保存</Button>
          </ButtonPair>
        </TopRight>
      </TopBar>

      <Sheet>
        <SheetHead>
          <Cluster $gap={10}>
            <EditableTitle as="h2" $line="#2f78c2" $bold>咖啡门店点地图</EditableTitle>
            <InfoIcon />
          </Cluster>
          <Cluster $gap={59}>
            <Button $bg={BLUE} $fg="#d3d8de" $bold>保存</Button>
            <IconButton aria-label="关闭"><CloseIcon /></IconButton>
          </Cluster>
        </SheetHead>

        <Columns>
          <LeftPanel>
            <CollapseTab aria-label="收起"><Chevron dir="left" w={18} h={34} color="#101114" /></CollapseTab>
            <Heading>数据源</Heading>
            <Box $h={72} $left={29}>
              <SourceName>连锁门店数据报告</SourceName>
              <IconButton aria-label="更换数据源"><RefreshIcon /></IconButton>
            </Box>

            <Heading $top={80}><label htmlFor="scope">数据获取权限</label></Heading>
            <SelectBox $h={72} $left={23}>
              <PlainSelect id="scope"><option>表单中的数据</option></PlainSelect>
              <Chevron dir="down" w={26} h={14} color="#3a3c40" />
            </SelectBox>
            <Help>成员访问图表时可以查看图表中的全部数据和字段。</Help>

            <Heading $top={78}>数据过滤</Heading>
            <FilterRow>
              筛选出符合以下
              <FilterMode>
                <PlainSelect aria-label="条件关系" $color={BLUE}><option>全部</option></PlainSelect>
                <Chevron dir="down" w={26} h={14} />
              </FilterMode>
              条件的数据
            </FilterRow>
            <LinkRow>
              <LinkButton><Plus size={38} s={3} />添加过滤条件</LinkButton>
              <LinkButton><Plus size={38} s={3} />添加条件组</LinkButton>
            </LinkRow>

            <Heading $top={98}>字段</Heading>
            <Box $h={78} $left={26}>
              <SearchIcon />
              <SearchInput aria-label="搜索" placeholder="搜索" />
            </Box>
            <TableHead>工作表<Chevron dir="up" w={30} h={16} color="#303236" /></TableHead>
            {fields.map((name) => {
              const on = name === "定位";
              return (
                <Field key={name}>
                  <Tick><TickInput type="checkbox" defaultChecked={on} />{on && <CheckIcon />}</Tick>
                  <FieldIcon>{on ? <PlaceIcon /> : <TextFieldIcon />}</FieldIcon>
                  {name}
                </Field>
              );
            })}
          </LeftPanel>

          <MapFrame>
            <MapDrawing />
            <ZoomControl>
              <ZoomButton>+</ZoomButton>
              <ZoomButton>-</ZoomButton>
            </ZoomControl>
          </MapFrame>

          <RightPanel>
            <PanelTabs>
              <PanelTab>配置</PanelTab>
              <PanelTab $on>样式</PanelTab>
            </PanelTabs>
            <Group $bottom={63}>
              <GroupHead><Chevron dir="up" w={30} h={16} />标点样式</GroupHead>
              <IconRow>图标<PinButton aria-label="图标"><PinIcon /></PinButton></IconRow>
              <Caption>尺寸</Caption>
              <Segments>
                {["小", "中", "大"].map((s, i) => (
                  <Segment key={s} $on={i === 0}>
                    <input type="radio" name="size" defaultChecked={i === 0} />
                    {s}
                  </Segment>
                ))}
              </Segments>
              <Caption>配色</Caption>
              <WideButton>设置</WideButton>
            </Group>
            <Group $bottom={33}>
              <GroupHead><Chevron dir="down" w={30} h={16} />整体风格</GroupHead>
            </Group>
          </RightPanel>
        </Columns>
      </Sheet>

      <Mask>
        <Dialog role="dialog" aria-label="图表配色">
          <DialogTitle>图表配色</DialogTitle>
          <ThemeArea>
            <ThemeLabel>配色主题</ThemeLabel>
            <ThemeStrip>{theme.map((c) => <ThemeCell key={c} $c={c} />)}</ThemeStrip>
          </ThemeArea>
          <DashLine />
          <DialogBody>
            <Uniform>
              <SwitchRow>
                <label htmlFor="uniform">统一配色</label>
                <SwitchBox>
                  <SwitchInput id="uniform" type="checkbox" defaultChecked />
                  <SwitchText>开</SwitchText>
                </SwitchBox>
              </SwitchRow>
              <Hint>设置各条数据对应的颜色</Hint>
            </Uniform>
            <ColorList>
              {listed.map((c, i) => (
                <ColorItem key={c} $active={i === 0}>
                  <ColorField $c={c} $active={i === 0} aria-label={c} />
                </ColorItem>
              ))}
            </ColorList>
          </DialogBody>
          <DashLine />
          <DialogFoot>
            <Button $line="#dcdfe5" $fg="#101114">取消</Button>
            <Button $bg={MODAL_BLUE} $fg="#fff" $bold>确定</Button>
          </DialogFoot>
          <Thumb />

          <Popover>
            <SwatchTitle>预设颜色</SwatchTitle>
            <Swatches>
              {theme.map((c) => (
                <Swatch key={c} $c={c} aria-label={c}>{c === "#ea5050" && <Root />}</Swatch>
              ))}
            </Swatches>
            <SwatchTitle $top={35}>自定义颜色</SwatchTitle>
            <CustomRow>
              <AddSwatch aria-label="添加颜色"><Plus size={22} s={5} /></AddSwatch>
              {custom.map((c) => (
                <Swatch key={c} $c={c} aria-label={c}>{c === "#ea5050" && <Root />}</Swatch>
              ))}
            </CustomRow>
            <Arrow width="40" height="20" viewBox="0 0 40 20">
              <path d="M0 0H40L20 18Z" fill="#fff" />
              <path d="M2 1L20 18L38 1" fill="none" stroke="#e3e3e5" strokeWidth="2" />
            </Arrow>
          </Popover>

          <Callout $x={26} $y={410} $w={388} $h={200} />
          <Callout $x={730} $y={-140} $w={700} $h={580} />
          <Badge $x={28} $y={632}>1</Badge>
          <Badge $x={732} $y={458}>2</Badge>
        </Dialog>
      </Mask>
    </Page>
  );
}
